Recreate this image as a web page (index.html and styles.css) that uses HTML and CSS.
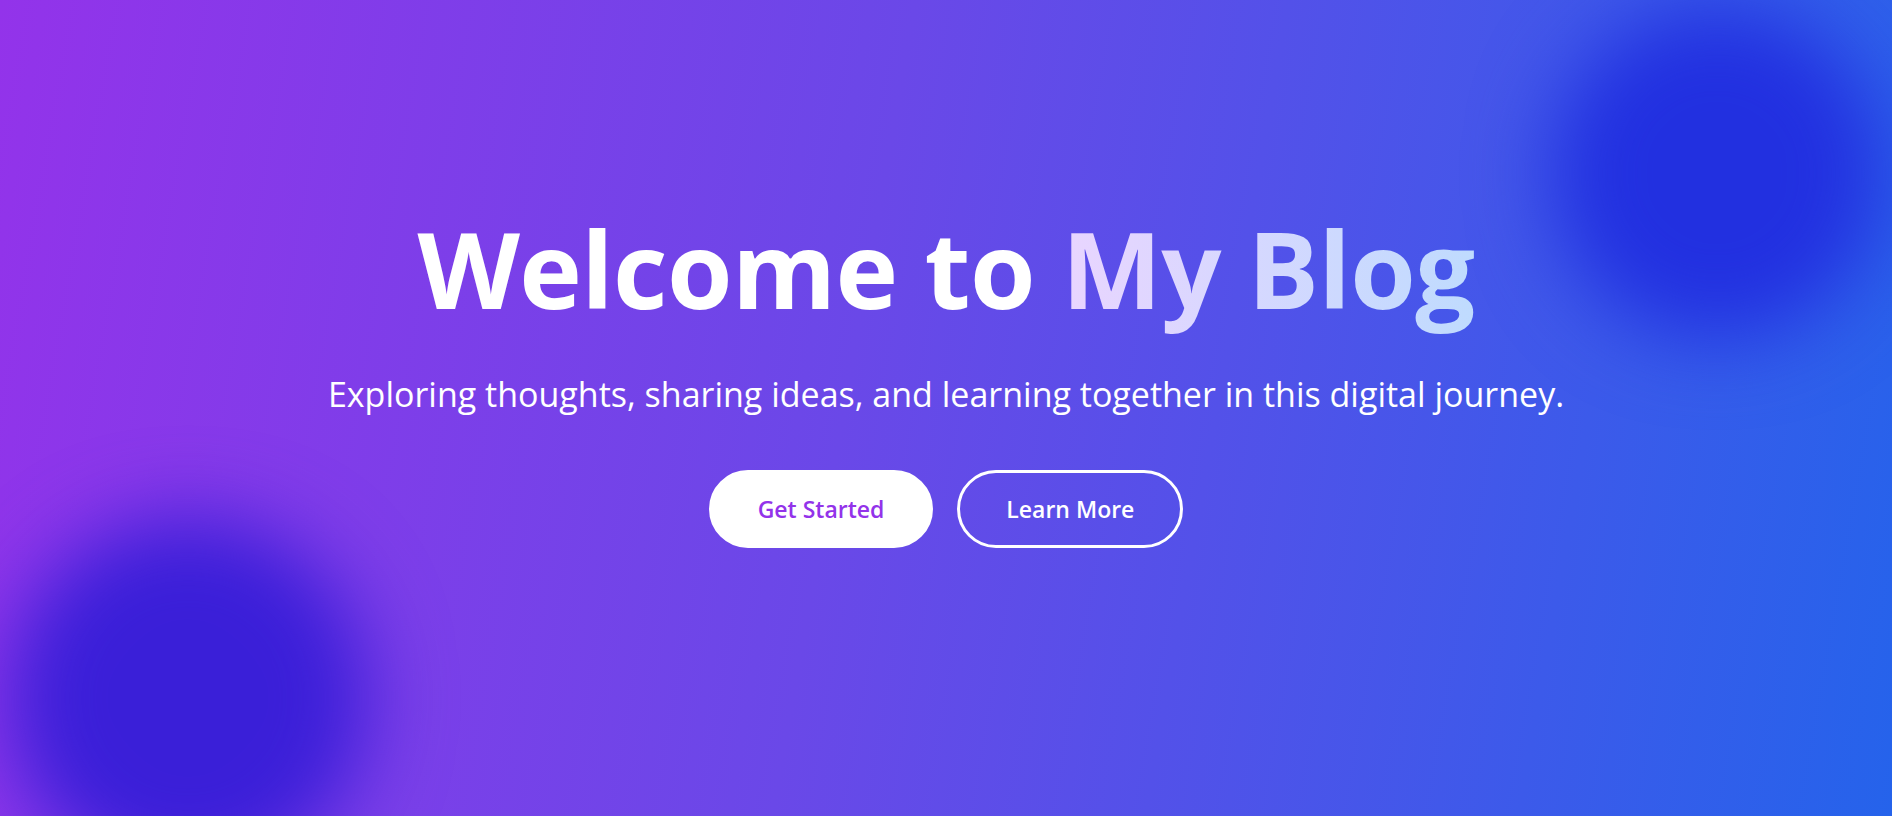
FILE: index.html
```html
<!DOCTYPE html>
<html lang="en">
<head>
<meta charset="utf-8">
<title>Welcome to My Blog</title>
<link rel="stylesheet" href="styles.css">
</head>
<body>
<section class="hero">
  <div class="blob blob-tr"></div>
  <div class="blob blob-bl"></div>
  <div class="hero-content">
    <h1 class="hero-title">Welcome to <span class="hero-accent">My Blog</span></h1>
    <p class="hero-sub">Exploring thoughts, sharing ideas, and learning together in this digital journey.</p>
    <div class="hero-actions">
      <a class="btn btn-solid" href="#">Get Started</a>
      <a class="btn btn-outline" href="#">Learn More</a>
    </div>
  </div>
</section>
</body>
</html>
```

FILE: styles.css
```css
* { box-sizing: border-box; }
html, body { margin: 0; padding: 0; }
body {
  font-family: "Open Sans", "Noto Sans", sans-serif;
  overflow: hidden;
}
.hero {
  position: relative;
  height: 816px;
  overflow: hidden;
  background: linear-gradient(100deg, #9333ea 0%, #6a48e8 45%, #2563eb 100%);
  display: flex;
  flex-direction: column;
  align-items: center;
  justify-content: center;
  padding-bottom: 53px;
}
.blob {
  position: absolute;
  border-radius: 50%;
  filter: blur(40px);
}
.blob-tr {
  width: 330px;
  height: 330px;
  left: 1552px;
  top: 8px;
  background: #2230e0;
}
.blob-bl {
  width: 360px;
  height: 360px;
  left: 8px;
  top: 518px;
  background: #3a1fd8;
}
.hero-content {
  position: relative;
  display: flex;
  flex-direction: column;
  align-items: center;
  text-align: center;
}
.hero-title {
  margin: 0 0 49px;
  font-size: 106px;
  line-height: 1;
  font-weight: 700;
  color: #fff;
  letter-spacing: -0.6px;
}
.hero-accent {
  background: linear-gradient(90deg, #e9d5ff, #bfdbfe);
  -webkit-background-clip: text;
  background-clip: text;
  color: transparent;
}
.hero-sub {
  margin: 0 0 52px;
  font-size: 34px;
  line-height: 48px;
  font-weight: 400;
  color: #fff;
  letter-spacing: 0;
}
.hero-actions {
  display: flex;
  gap: 24px;
}
.btn {
  display: inline-block;
  padding: 18px 46px;
  border: 3px solid #fff;
  border-radius: 9999px;
  font-size: 23px;
  line-height: 36px;
  font-weight: 600;
  text-decoration: none;
}
.btn-solid {
  background: #fff;
  color: #9333ea;
}
.btn-outline {
  background: transparent;
  color: #fff;
}
```
